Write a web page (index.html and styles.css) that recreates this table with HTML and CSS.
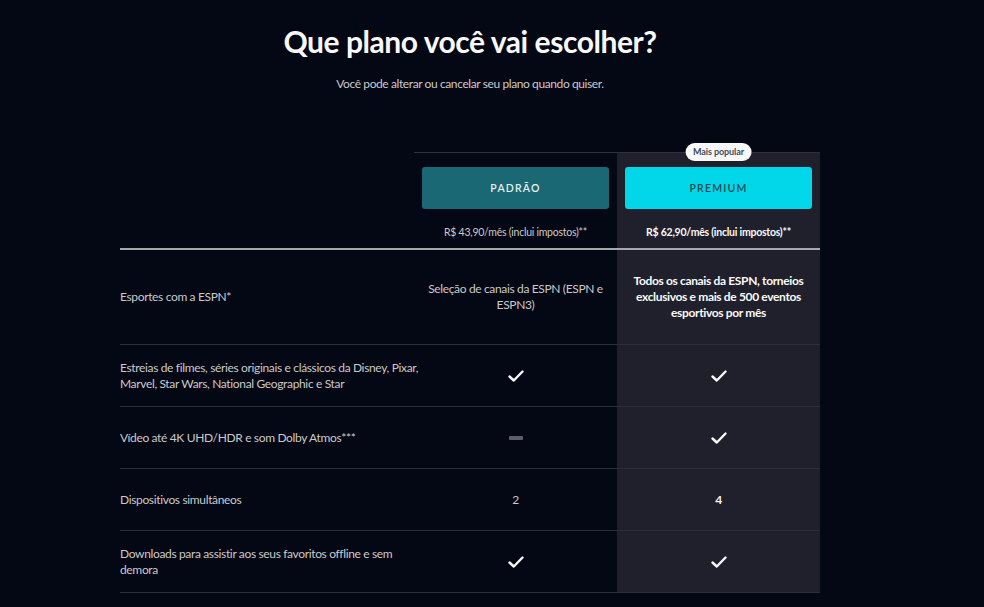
FILE: index.html
```html
<!DOCTYPE html>
<html lang="pt-BR">
<head>
<meta charset="utf-8">
<title>Que plano você vai escolher?</title>
<link rel="stylesheet" href="styles.css">
</head>
<body>
<main class="page">
  <header class="intro">
    <h1 class="title">Que plano você vai escolher?</h1>
    <p class="subtitle">Você pode alterar ou cancelar seu plano quando quiser.</p>
  </header>

  <section class="plans">
    <div class="row head-row">
      <div class="cell label"></div>
      <div class="cell plan">
        <button class="plan-btn btn-standard">PADRÃO</button>
        <p class="price">R$ 43,90/mês (inclui impostos)**</p>
      </div>
      <div class="cell plan premium">
        <span class="badge">Mais popular</span>
        <button class="plan-btn btn-premium">PREMIUM</button>
        <p class="price price-premium">R$ 62,90/mês (inclui impostos)**</p>
      </div>
    </div>

    <div class="row feature tall">
      <div class="cell label">Esportes com a ESPN*</div>
      <div class="cell value">Seleção de canais da ESPN (ESPN e ESPN3)</div>
      <div class="cell value premium strong">Todos os canais da ESPN, torneios exclusivos e mais de 500 eventos esportivos por mês</div>
    </div>

    <div class="row feature">
      <div class="cell label">Estreias de filmes, séries originais e clássicos da Disney, Pixar, Marvel, Star Wars, National Geographic e Star</div>
      <div class="cell value"><svg class="check" viewBox="0 0 16 12"><path d="M1.5 6.5 L5.8 10.5 L14.5 1.5" /></svg></div>
      <div class="cell value premium"><svg class="check" viewBox="0 0 16 12"><path d="M1.5 6.5 L5.8 10.5 L14.5 1.5" /></svg></div>
    </div>

    <div class="row feature">
      <div class="cell label">Vídeo até 4K UHD/HDR e som Dolby Atmos***</div>
      <div class="cell value"><span class="dash"></span></div>
      <div class="cell value premium"><svg class="check" viewBox="0 0 16 12"><path d="M1.5 6.5 L5.8 10.5 L14.5 1.5" /></svg></div>
    </div>

    <div class="row feature">
      <div class="cell label">Dispositivos simultâneos</div>
      <div class="cell value">2</div>
      <div class="cell value premium strong">4</div>
    </div>

    <div class="row feature">
      <div class="cell label">Downloads para assistir aos seus favoritos offline e sem demora</div>
      <div class="cell value"><svg class="check" viewBox="0 0 16 12"><path d="M1.5 6.5 L5.8 10.5 L14.5 1.5" /></svg></div>
      <div class="cell value premium"><svg class="check" viewBox="0 0 16 12"><path d="M1.5 6.5 L5.8 10.5 L14.5 1.5" /></svg></div>
    </div>
  </section>
</main>
</body>
</html>
```

FILE: styles.css
```css
* { box-sizing: border-box; }

html, body {
  margin: 0;
  padding: 0;
  background: #040714;
}

body {
  font-family: Lato, "Open Sans", "Liberation Sans", sans-serif;
  color: #f9f9f9;
  width: 984px;
  height: 607px;
  overflow: hidden;
}

.page {
  width: 700px;
  margin-left: 120px;
  padding-top: 21px;
}

.intro {
  text-align: center;
}

.title {
  margin: 0;
  font-size: 30px;
  line-height: 40px;
  font-weight: 700;
  color: #f9f9f9;
  letter-spacing: -0.45px;
}

.subtitle {
  margin: 15px 0 0;
  font-size: 12px;
  line-height: 16px;
  color: #cacaca;
  letter-spacing: -0.4px;
}

.plans {
  margin-top: 60px;
}

.row {
  display: grid;
  grid-template-columns: 294px 203px 203px;
}

.head-row {
  border-bottom: 2px solid #a7a8ad;
}

.head-row .plan {
  border-top: 1px solid #2e303b;
  padding: 14px 8px 0;
  display: flex;
  flex-direction: column;
  align-items: center;
  position: relative;
}

.premium {
  background: #1f202b;
}

.plan-btn {
  width: 100%;
  height: 42px;
  border: 0;
  border-radius: 3px;
  font-family: inherit;
  font-size: 10.5px;
  font-weight: 600;
  letter-spacing: 1.2px;
  cursor: pointer;
}

.btn-standard {
  background: #1a6874;
  color: #e6eef0;
}

.btn-premium {
  background: #02d7e9;
  color: #17474f;
}

.badge {
  position: absolute;
  top: -10px;
  left: 50%;
  transform: translateX(-50%);
  background: #f9f9f9;
  color: #3c4b5d;
  font-size: 9px;
  font-weight: 700;
  line-height: 18px;
  padding: 0 8px;
  border-radius: 9px;
  white-space: nowrap;
  letter-spacing: -0.1px;
}

.price {
  margin: 0;
  padding: 16px 0 8px;
  font-size: 10.5px;
  line-height: 15px;
  color: #cacaca;
  letter-spacing: -0.25px;
}

.price-premium {
  color: #f9f9f9;
  font-weight: 700;
}

.feature {
  border-bottom: 1px solid #2b2d38;
  min-height: 62px;
}

.cell {
  display: flex;
  align-items: center;
}

.feature .cell {
  padding: 14px 0;
  font-size: 12px;
  line-height: 16px;
  letter-spacing: -0.35px;
}

.feature .label {
  color: #cacaca;
  margin-right: -14px;
}

.feature .value {
  justify-content: center;
  text-align: center;
  color: #cacaca;
  padding-left: 14px;
  padding-right: 14px;
}

.feature .strong {
  color: #f9f9f9;
  font-weight: 700;
}

.feature.tall .cell {
  padding-top: 23px;
  padding-bottom: 23px;
}

.check {
  width: 16px;
  height: 12px;
  fill: none;
  stroke: #f9f9f9;
  stroke-width: 2.4;
  stroke-linecap: round;
  stroke-linejoin: round;
}

.dash {
  display: block;
  width: 14px;
  height: 4px;
  border-radius: 1px;
  background: #5b5e69;
}
```
